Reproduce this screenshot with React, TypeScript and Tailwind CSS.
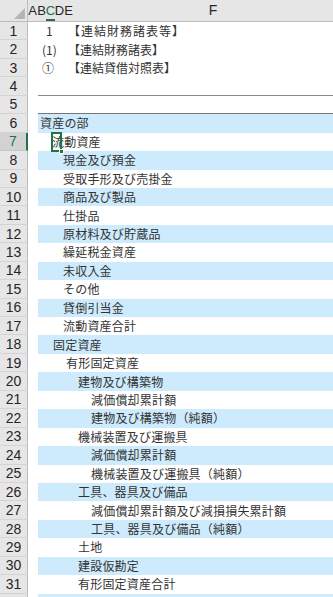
import React from 'react';

type Row = {
  n: number;
  label?: string;
  indent?: number;
  fill?: boolean;
};

const rows: Row[] = [
  { n: 6, label: '資産の部', indent: 2, fill: true },
  { n: 7, label: '流動資産', indent: 14 },
  { n: 8, label: '現金及び預金', indent: 25, fill: true },
  { n: 9, label: '受取手形及び売掛金', indent: 25 },
  { n: 10, label: '商品及び製品', indent: 25, fill: true },
  { n: 11, label: '仕掛品', indent: 25 },
  { n: 12, label: '原材料及び貯蔵品', indent: 25, fill: true },
  { n: 13, label: '繰延税金資産', indent: 25 },
  { n: 14, label: '未収入金', indent: 25, fill: true },
  { n: 15, label: 'その他', indent: 25 },
  { n: 16, label: '貸倒引当金', indent: 25, fill: true },
  { n: 17, label: '流動資産合計', indent: 25 },
  { n: 18, label: '固定資産', indent: 15, fill: true },
  { n: 19, label: '有形固定資産', indent: 28 },
  { n: 20, label: '建物及び構築物', indent: 40, fill: true },
  { n: 21, label: '減価償却累計額', indent: 53 },
  { n: 22, label: '建物及び構築物（純額）', indent: 53, fill: true },
  { n: 23, label: '機械装置及び運搬具', indent: 40 },
  { n: 24, label: '減価償却累計額', indent: 53, fill: true },
  { n: 25, label: '機械装置及び運搬具（純額）', indent: 53 },
  { n: 26, label: '工具、器具及び備品', indent: 40, fill: true },
  { n: 27, label: '減価償却累計額及び減損損失累計額', indent: 53 },
  { n: 28, label: '工具、器具及び備品（純額）', indent: 53, fill: true },
  { n: 29, label: '土地', indent: 40 },
  { n: 30, label: '建設仮勘定', indent: 40, fill: true },
  { n: 31, label: '有形固定資産合計', indent: 40 },
];

const jp = "font-['Noto_Sans_CJK_JP','Liberation_Sans',sans-serif]";

function RowHeader({ n, selected }: { n?: number; selected?: boolean }) {
  return (
    <div
      className={`w-[28px] shrink-0 flex items-center justify-center text-[14px] leading-none border-b ${
        selected
          ? 'bg-[#d2d2d2] text-[#217346] border-r-2 border-r-[#217346] border-b-[#c6c6c6]'
          : 'bg-[#e6e6e6] text-[#262626] border-r border-r-[#bdbdbd] border-b-[#d4d4d4]'
      }`}
    >
      {n}
    </div>
  );
}

export default function App() {
  return (
    <div className="w-[333px] h-[597px] overflow-hidden bg-white font-['Liberation_Sans',sans-serif]">
      {/* Column headers */}
      <div className="flex h-[22px] bg-[#e6e6e6] border-b border-[#bdbdbd]">
        <div className="w-[28px] shrink-0 flex items-end justify-end pr-[2px] pb-[2px] border-r border-[#bdbdbd]">
          <svg width="11" height="11" viewBox="0 0 11 11">
            <polygon points="11,0 11,11 0,11" fill="#b4b4b4" />
          </svg>
        </div>
        {['A', 'B', 'C', 'D', 'E'].map((c) => (
          <div
            key={c}
            className={`w-[9px] shrink-0 flex items-center justify-center text-[13px] leading-none ${
              c === 'C' ? 'text-[#217346] border-b-2 border-[#217346] pt-[2px]' : 'text-[#262626]'
            }`}
          >
            {c}
          </div>
        ))}
        <div className="w-[280px] shrink-0 flex items-center justify-center text-[14px] text-[#262626]">F</div>
      </div>

      {/* Rows 1-3: headings */}
      {[
        { n: 1, mark: '1', pad: 'pl-[8px]', text: '【連結財務諸表等】', wide: true },
        { n: 2, mark: '(1)', pad: 'pl-[4px]', text: '【連結財務諸表】' },
        { n: 3, mark: '①', pad: 'pl-[4px]', text: '【連結貸借対照表】' },
      ].map((r) => (
        <div key={r.n} className="flex h-[18.45px]">
          <RowHeader n={r.n} />
          <div className={`flex-1 flex items-center pl-[10px] text-[12px] text-[#333] ${jp}`}>
            <span className={`w-[30px] shrink-0 ${r.pad}`}>{r.mark}</span>
            <span className={r.wide ? 'tracking-[1px]' : ''}>{r.text}</span>
          </div>
        </div>
      ))}

      {/* Row 4, 5: rule lines */}
      <div className="flex h-[18.45px]">
        <RowHeader n={4} />
        <div className="flex-1 pl-[10px]">
          <div className="h-full border-b border-[#8a8a8a]" />
        </div>
      </div>
      <div className="flex h-[18.45px]">
        <RowHeader n={5} />
        <div className="flex-1 pl-[10px]">
          <div className="h-full border-b border-[#767676]" />
        </div>
      </div>

      {/* Balance sheet rows */}
      {rows.map((r) => (
        <div key={r.n} className="flex h-[18.45px]">
          <RowHeader n={r.n} selected={r.n === 7} />
          <div className="flex-1 pl-[10px]">
            <div
              className={`relative h-full flex items-center text-[12px] text-[#333] whitespace-nowrap tracking-[0.2px] ${jp} ${
                r.fill ? 'bg-[#cdebfc]' : 'bg-white'
              }`}
              style={{ paddingLeft: r.indent }}
            >
              <span>{r.label}</span>
              {r.n === 7 && (
                <div className="absolute z-10 left-[13px] top-[-1px] w-[11px] h-[20px] border-2 border-[#217346]">
                  <div className="absolute right-[-4px] bottom-[-4px] w-[5px] h-[5px] bg-[#217346] border border-white" />
                </div>
              )}
            </div>
          </div>
        </div>
      ))}

      {/* Row 32, cut off at the window edge */}
      <div className="flex h-[18.45px]">
        <RowHeader />
        <div className="flex-1 pl-[10px]">
          <div className="h-full bg-[#cdebfc]" />
        </div>
      </div>
    </div>
  );
}
